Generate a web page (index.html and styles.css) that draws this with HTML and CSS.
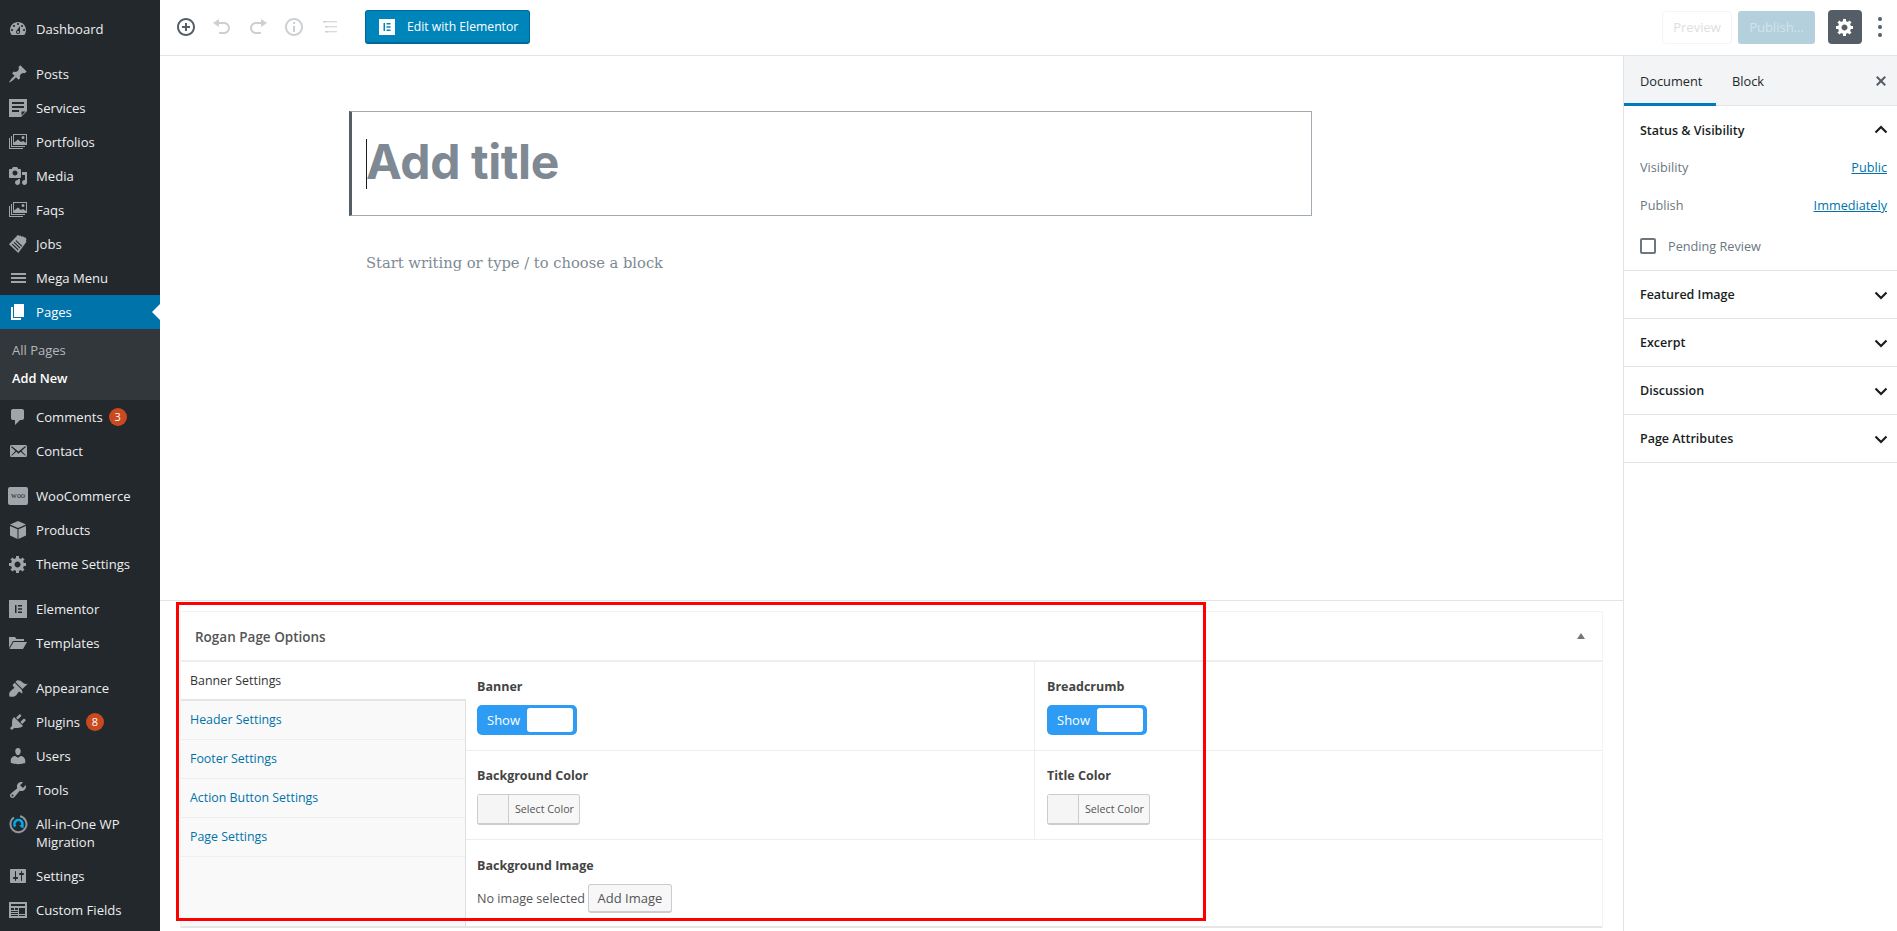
FILE: index.html
```html
<!DOCTYPE html>
<html lang="en">
<head>
<meta charset="utf-8">
<title>Add New Page</title>
<link rel="stylesheet" href="styles.css">
</head>
<body>
<div class="app">
  <nav class="adminmenu">
    <a class="mi gap-top"><span class="ic"><svg viewBox="0 0 20 20"><path d="M3.76 16h12.48c1.1-1.37 1.76-3.11 1.76-5 0-4.42-3.58-8-8-8s-8 3.58-8 8c0 1.89.66 3.63 1.76 5zM10 4c.55 0 1 .45 1 1s-.45 1-1 1-1-.45-1-1 .45-1 1-1zM6 6c.55 0 1 .45 1 1s-.45 1-1 1-1-.45-1-1 .45-1 1-1zm8 0c.55 0 1 .45 1 1s-.45 1-1 1-1-.45-1-1 .45-1 1-1zm-5.37 5.55L12 7v6c0 1.1-.9 2-2 2s-2-.9-2-2c0-.57.24-1.08.63-1.45zM4 10c.55 0 1 .45 1 1s-.45 1-1 1-1-.45-1-1 .45-1 1-1zm12 0c.55 0 1 .45 1 1s-.45 1-1 1-1-.45-1-1 .45-1 1-1zm-5 3c0-.55-.45-1-1-1s-1 .45-1 1 .45 1 1 1 1-.45 1-1z"/></svg></span><span class="lb">Dashboard</span></a>
    <div class="sep"></div>
    <a class="mi"><span class="ic"><svg viewBox="0 0 20 20"><path d="M10.44 3.02l1.82-1.82 6.36 6.35-1.83 1.82c-1.05-.68-2.48-.57-3.41.36l-.75.75c-.92.93-1.04 2.35-.35 3.41l-1.83 1.82-2.41-2.41-2.8 2.79c-.42.42-3.38 2.71-3.8 2.29s1.86-3.39 2.28-3.81l2.79-2.79L4.1 9.36l1.83-1.82c1.05.69 2.48.57 3.4-.36l.75-.75c.93-.92 1.05-2.35.36-3.41z"/></svg></span><span class="lb">Posts</span></a>
    <a class="mi"><span class="ic"><svg viewBox="0 0 20 20"><path fill-rule="evenodd" d="M1 1h18v12l-6 6H1V1zm3 3v2h12V4H4zm0 4v2h12V8H4zm0 4v2h7v-2H4zm9.500 5.500l4-4h-4v4z"/></svg></span><span class="lb">Services</span></a>
    <a class="mi"><span class="ic"><svg viewBox="0 0 20 20"><path fill-rule="evenodd" d="M5 2h14v11H5V2zm1 1v7.500l4-3 3 2.500 2-1 3 2V3H6zm9 1a1.500 1.500 0 100 3 1.500 1.500 0 000-3zM3 4h1v10h13v1H3V4zM1 6h1v10h13v1H1V6z"/></svg></span><span class="lb">Portfolios</span></a>
    <a class="mi"><span class="ic"><svg viewBox="0 0 20 20"><path d="M13 11V4c0-.55-.45-1-1-1h-1.670L9 1H5L3.670 3H2c-.55 0-1 .45-1 1v7c0 .55.45 1 1 1h10c.55 0 1-.45 1-1zM7 4.500c1.380 0 2.500 1.120 2.500 2.500S8.380 9.500 7 9.500 4.500 8.380 4.500 7 5.620 4.500 7 4.500zM14 6h5v10.500c0 1.380-1.120 2.500-2.500 2.500S14 17.880 14 16.500s1.120-2.500 2.500-2.500c.17 0 .34.02.5.05V9h-3V6zm-4 8.050V13h2v3.500c0 1.380-1.120 2.500-2.500 2.500S7 17.880 7 16.500 8.120 14 9.500 14c.17 0 .34.02.5.05z"/></svg></span><span class="lb">Media</span></a>
    <a class="mi"><span class="ic"><svg viewBox="0 0 20 20"><path fill-rule="evenodd" d="M5 2h14v11H5V2zm1 1v7.500l4-3 3 2.500 2-1 3 2V3H6zm9 1a1.500 1.500 0 100 3 1.500 1.500 0 000-3zM3 4h1v10h13v1H3V4zM1 6h1v10h13v1H1V6z"/></svg></span><span class="lb">Faqs</span></a>
    <a class="mi"><span class="ic"><svg viewBox="0 0 20 20"><path fill-rule="evenodd" d="M10 .8l1.200 1.200 1.300-.5 1.200 1.200 1.300-.4 1.200 1.200 1.200-.3 1.100 2-.6 1.300.6 1.200L10.300 19 1 10.300 10 .8zM8.300 6.200l-.8.800 6 5.800.8-.8-6-5.800zM6.500 8l-.8.800 6 5.800.8-.8-6-5.800zM4.700 9.800l-.8.800 6 5.800.8-.8-6-5.800z"/></svg></span><span class="lb">Jobs</span></a>
    <a class="mi"><span class="ic"><svg viewBox="0 0 20 20"><path d="M3 5h15v2H3V5zm0 4h15v2H3V9zm0 4h15v2H3v-2z"/></svg></span><span class="lb">Mega Menu</span></a>
    <a class="mi mi-current"><span class="ic"><svg viewBox="0 0 20 20"><path d="M6 15V2h10v13H6zm-1 1h8v2H3V5h2v11z"/></svg></span><span class="lb">Pages</span></a>
    <div class="submenu">
      <a class="sub">All Pages</a>
      <a class="sub sub-current">Add New</a>
    </div>
    <a class="mi"><span class="ic"><svg viewBox="0 0 20 20"><path d="M5 2h9c1.100 0 2 .9 2 2v7c0 1.100-.9 2-2 2h-2l-5 5v-5H5c-1.100 0-2-.9-2-2V4c0-1.100.9-2 2-2z"/></svg></span><span class="lb">Comments</span><span class="badge">3</span></a>
    <a class="mi"><span class="ic"><svg viewBox="0 0 20 20"><path d="M19 14.500v-9c0-.83-.67-1.500-1.500-1.500H3.490c-.83 0-1.500.67-1.500 1.500v9c0 .83.67 1.500 1.500 1.500H17.500c.83 0 1.500-.67 1.500-1.500zm-1.310-9.110c.33.33.15.67-.03.84L13.600 9.950l3.900 4.060c.12.14.2.36.06.51-.13.16-.43.15-.56.05l-4.370-3.730-2.140 1.950-2.130-1.950-4.370 3.730c-.13.1-.43.11-.56-.05-.14-.15-.06-.37.06-.51l3.900-4.060-4.060-3.720c-.18-.17-.36-.51-.03-.84s.67-.17.95.07l6.240 5.040 6.250-5.040c.28-.24.62-.4.95-.07z"/></svg></span><span class="lb">Contact</span></a>
    <div class="sep"></div>
    <a class="mi"><span class="ic"><span class="woo">woo</span></span><span class="lb">WooCommerce</span></a>
    <a class="mi"><span class="ic"><svg viewBox="0 0 20 20"><path d="M10 1l8 3.500-8 3.500-8-3.500L10 1zM2 6l7.500 3.300V19L2 15.500V6zm16 0v9.500L10.500 19V9.300L18 6z"/></svg></span><span class="lb">Products</span></a>
    <a class="mi"><span class="ic"><svg viewBox="0 0 20 20"><path d="M18 12h-2.180c-.17.7-.44 1.350-.81 1.930l1.540 1.540-2.100 2.100-1.540-1.540c-.58.36-1.230.63-1.910.79V19H8v-2.180c-.68-.16-1.330-.43-1.910-.79l-1.540 1.540-2.120-2.120 1.540-1.540c-.36-.58-.63-1.230-.79-1.910H1V9.030h2.170c.16-.7.44-1.350.8-1.940L2.430 5.550l2.100-2.100 1.540 1.540c.58-.37 1.240-.64 1.930-.81V2h3v2.180c.68.16 1.330.43 1.910.79l1.540-1.540 2.120 2.120-1.540 1.540c.36.59.64 1.240.8 1.940H18V12zm-8.500 1.500c1.660 0 3-1.340 3-3s-1.340-3-3-3-3 1.340-3 3 1.340 3 3 3z"/></svg></span><span class="lb">Theme Settings</span></a>
    <div class="sep"></div>
    <a class="mi"><span class="ic"><svg viewBox="0 0 20 20"><path fill-rule="evenodd" d="M1 1h18v18H1V1zm6 5v8h1.500V6H7zm3 0v1.600h4V6h-4zm0 3.200v1.600h4V9.200h-4zm0 3.200V14h4v-1.600h-4z"/></svg></span><span class="lb">Elementor</span></a>
    <a class="mi"><span class="ic"><svg viewBox="0 0 20 20"><path d="M1 4h6l1.500 2H16v2H5L1 15V4zm4.500 5H19l-4 7H1.500l4-7z"/></svg></span><span class="lb">Templates</span></a>
    <div class="sep"></div>
    <a class="mi"><span class="ic"><svg viewBox="0 0 20 20"><path d="M14.480 11.060L7.410 3.990l1.500-1.500c.5-.56 2.300-.47 3.510.32 1.210.8 1.430 1.280 2.910 2.100 1.180.64 2.450 1.260 4.450.85l-5.300 5.300zm-.71.71L6.700 4.700 4.930 6.470c-.39.39-.39 1.020 0 1.410l1.060 1.060c.39.39.39 1.030 0 1.420-.6.6-1.430 1.110-2.210 1.690-.35.26-.7.53-1.010.84C1.430 13.230.78 15.780 1.400 18.600c2.820.62 5.370-.03 6.710-1.370.31-.31.58-.66.84-1.010.58-.78 1.090-1.610 1.690-2.210.39-.39 1.030-.39 1.420 0l1.060 1.060c.39.39 1.020.39 1.410 0z"/></svg></span><span class="lb">Appearance</span></a>
    <a class="mi"><span class="ic"><svg viewBox="0 0 20 20"><path d="M13.110 4.360L9.870 7.600 8 5.730l3.240-3.240c.35-.34 1.050-.2 1.560.32.52.51.66 1.210.31 1.550zm-8 1.770l.91-1.120 9.010 9.010-1.190.84c-.71.71-2.630 1.160-3.820 1.160H6.140L4.900 17.260c-.59.59-1.540.59-2.120 0-.59-.58-.59-1.530 0-2.120l1.240-1.240v-3.880c0-1.130.4-3.190 1.090-3.890zm7.260 3.970l3.240-3.240c.34-.35 1.040-.21 1.550.31.52.51.66 1.210.31 1.550l-3.240 3.250z"/></svg></span><span class="lb">Plugins</span><span class="badge">8</span></a>
    <a class="mi"><span class="ic"><svg viewBox="0 0 20 20"><path d="M10 9.250c-2.270 0-2.730-3.440-2.730-3.440C7 4.020 7.820 2 9.970 2c2.160 0 2.980 2.020 2.710 3.810 0 0-.41 3.440-2.680 3.440zm0 2.570L12.720 10c2.390 0 4.520 2.330 4.520 4.530v2.490s-3.650 1.130-7.240 1.130c-3.650 0-7.240-1.130-7.240-1.130v-2.490c0-2.250 1.940-4.480 4.470-4.480z"/></svg></span><span class="lb">Users</span></a>
    <a class="mi"><span class="ic"><svg viewBox="0 0 20 20"><path d="M16.680 9.770c-1.340 1.340-3.300 1.670-4.950.99l-5.410 6.520c-.99.99-2.590.99-3.580 0s-.99-2.590 0-3.570l6.520-5.420c-.68-1.650-.35-3.610.99-4.950 1.280-1.280 3.120-1.620 4.720-1.060l-2.890 2.890 2.820 2.820 2.860-2.870c.53 1.580.18 3.390-1.080 4.650zM3.810 16.210c.4.39 1.040.39 1.430 0 .4-.4.4-1.040 0-1.430-.39-.4-1.030-.4-1.430 0-.39.39-.39 1.030 0 1.430z"/></svg></span><span class="lb">Tools</span></a>
    <a class="mi mi-tall"><span class="ic"><svg viewBox="0 0 20 20"><path fill="none" stroke="#8f979e" stroke-width="2" d="M6 3.500A8 8 0 1 0 12 2.300"/><path fill="none" stroke="#00aeef" stroke-width="2.600" d="M7.300 12.500A4 4 0 1 1 13 13"/><path fill="#00aeef" d="M11 11h4.500v3.500z"/></svg></span><span class="lb">All-in-One WP<br>Migration</span></a>
    <a class="mi"><span class="ic"><svg viewBox="0 0 20 20"><path d="M18 16V4c0-.55-.45-1-1-1H3c-.55 0-1 .45-1 1v12c0 .55.45 1 1 1h14c.55 0 1-.45 1-1zM8 11h1c.55 0 1 .45 1 1s-.45 1-1 1H8v1.500c0 .28-.22.5-.5.5s-.5-.22-.5-.5V13H6c-.55 0-1-.45-1-1s.45-1 1-1h1V5.500c0-.28.22-.5.5-.5s.5.22.5.5V11zm5-2h-1c-.55 0-1-.45-1-1s.45-1 1-1h1V5.500c0-.28.22-.5.5-.5s.5.22.5.5V7h1c.55 0 1 .45 1 1s-.45 1-1 1h-1v5.500c0 .28-.22.5-.5.5s-.5-.22-.5-.5V9z"/></svg></span><span class="lb">Settings</span></a>
    <a class="mi"><span class="ic"><svg viewBox="0 0 20 20"><path fill-rule="evenodd" d="M1 2h18v16H1V2zm2 2v2h14V4H3zm0 4v2h3V8H3zm4 0v2h3V8H7zm4 0v6h6V8h-6zm-8 3v1h7v-1H3zm0 2v1h7v-1H3zm0 2v1h7v-1H3zm8 0v1h6v-1h-6z"/></svg></span><span class="lb">Custom Fields</span></a>
  </nav>

  <div class="workspace">
    <header class="topbar">
      <div class="tools">
        <span class="tool tool-on"><svg viewBox="0 0 20 20"><path d="M10 1c-5 0-9 4-9 9s4 9 9 9 9-4 9-9-4-9-9-9zm0 16c-3.900 0-7-3.100-7-7s3.100-7 7-7 7 3.100 7 7-3.100 7-7 7zm1-11H9v3H6v2h3v3h2v-3h3V9h-3V6z"/></svg></span>
        <span class="tool"><svg viewBox="0 0 20 20"><path d="M12 5H7V2L1 6l6 4V7h5c2.200 0 4 1.800 4 4s-1.800 4-4 4H7v2h5c3.300 0 6-2.700 6-6s-2.700-6-6-6z"/></svg></span>
        <span class="tool"><svg viewBox="0 0 20 20"><path d="M8 5h5V2l6 4-6 4V7H8c-2.200 0-4 1.800-4 4s1.800 4 4 4h5v2H8c-3.300 0-6-2.700-6-6s2.700-6 6-6z"/></svg></span>
        <span class="tool"><svg viewBox="0 0 20 20"><path d="M10 1c-5 0-9 4-9 9s4 9 9 9 9-4 9-9-4-9-9-9zm0 16c-3.900 0-7-3.100-7-7s3.100-7 7-7 7 3.100 7 7-3.100 7-7 7zM9 9h2v6H9V9zm0-4h2v2H9V5z"/></svg></span>
        <span class="tool"><svg viewBox="0 0 20 20"><path d="M3 4h3v1.500H3V4zm3 .3h11v1H6zM5 9h3v1.500H5V9zm3 .3h9v1H8zM5 14h3v1.500H5V14zm3 .3h9v1H8z"/></svg></span>
      </div>
      <a class="elementor-btn"><span class="el-logo"><svg viewBox="0 0 16 16"><path fill="#0085ba" d="M4.500 4h1.500v8H4.500V4zm3 0h4v1.500h-4V4zm0 3.250h4v1.500h-4v-1.500zm0 3.250h4V12h-4v-1.500z"/></svg></span>Edit with Elementor</a>
      <div class="spacer"></div>
      <a class="btn-preview">Preview</a>
      <a class="btn-publish">Publish...</a>
      <a class="btn-gear"><svg viewBox="0 0 20 20"><path d="M18 12h-2.180c-.17.7-.44 1.350-.81 1.930l1.540 1.540-2.100 2.100-1.540-1.540c-.58.36-1.230.63-1.910.79V19H8v-2.180c-.68-.16-1.330-.43-1.910-.79l-1.540 1.540-2.120-2.120 1.540-1.540c-.36-.58-.63-1.230-.79-1.910H1V9.030h2.170c.16-.7.44-1.350.8-1.940L2.430 5.550l2.100-2.100 1.540 1.540c.58-.37 1.240-.64 1.930-.81V2h3v2.180c.68.16 1.330.43 1.910.79l1.540-1.540 2.120 2.120-1.540 1.540c.36.59.64 1.240.8 1.940H18V12zm-8.500 1.500c1.660 0 3-1.340 3-3s-1.340-3-3-3-3 1.340-3 3 1.340 3 3 3z"/></svg></a>
      <span class="kebab"><i></i><i></i><i></i></span>
    </header>

    <div class="body-row">
      <main class="editor">
        <section class="canvas">
          <div class="title-box"><span class="caret"></span><span class="title-ph">Add title</span></div>
          <p class="block-ph">Start writing or type / to choose a block</p>
        </section>
        <section class="metaboxes">
          <div class="metabox">
            <div class="mb-head"><span class="mb-title">Rogan Page Options</span><span class="mb-toggle"></span></div>
            <div class="mb-body">
              <ul class="mb-tabs">
                <li class="tab tab-active">Banner Settings</li>
                <li class="tab">Header Settings</li>
                <li class="tab">Footer Settings</li>
                <li class="tab">Action Button Settings</li>
                <li class="tab">Page Settings</li>
              </ul>
              <div class="mb-fields">
                <div class="field field-l">
                  <div class="f-label">Banner</div>
                  <div class="switch"><span class="sw-text">Show</span><span class="sw-knob"></span></div>
                </div>
                <div class="field field-r">
                  <div class="f-label">Breadcrumb</div>
                  <div class="switch"><span class="sw-text">Show</span><span class="sw-knob"></span></div>
                </div>
                <div class="field field-l">
                  <div class="f-label">Background Color</div>
                  <div class="color-btn"><span class="swatch"></span><span class="color-text">Select Color</span></div>
                </div>
                <div class="field field-r">
                  <div class="f-label">Title Color</div>
                  <div class="color-btn"><span class="swatch"></span><span class="color-text">Select Color</span></div>
                </div>
                <div class="field field-wide">
                  <div class="f-label">Background Image</div>
                  <div class="img-row"><span class="img-none">No image selected</span><a class="add-img">Add Image</a></div>
                </div>
              </div>
            </div>
          </div>
          <div class="highlight"></div>
        </section>
      </main>

      <aside class="settings">
        <div class="s-tabs">
          <span class="s-tab s-tab-active">Document</span>
          <span class="s-tab">Block</span>
          <span class="s-close"><svg viewBox="0 0 20 20"><path d="M14.950 6.460L11.410 10l3.540 3.540-1.410 1.410L10 11.420l-3.530 3.530-1.420-1.420L8.580 10 5.050 6.470l1.420-1.420L10 8.580l3.540-3.530z"/></svg></span>
        </div>
        <div class="panel panel-open">
          <div class="p-head"><span>Status &amp; Visibility</span><svg class="chev" viewBox="0 0 20 20"><path d="M4.500 12.500L10 7l5.500 5.500"/></svg></div>
          <div class="p-row"><span>Visibility</span><a class="p-link">Public</a></div>
          <div class="p-row"><span>Publish</span><a class="p-link">Immediately</a></div>
          <div class="p-check"><span class="cb"></span><span>Pending Review</span></div>
        </div>
        <div class="panel"><div class="p-head"><span>Featured Image</span><svg class="chev" viewBox="0 0 20 20"><path d="M4.500 7.500L10 13l5.500-5.500"/></svg></div></div>
        <div class="panel"><div class="p-head"><span>Excerpt</span><svg class="chev" viewBox="0 0 20 20"><path d="M4.500 7.500L10 13l5.500-5.500"/></svg></div></div>
        <div class="panel"><div class="p-head"><span>Discussion</span><svg class="chev" viewBox="0 0 20 20"><path d="M4.500 7.500L10 13l5.500-5.500"/></svg></div></div>
        <div class="panel"><div class="p-head"><span>Page Attributes</span><svg class="chev" viewBox="0 0 20 20"><path d="M4.500 7.500L10 13l5.500-5.500"/></svg></div></div>
      </aside>
    </div>
  </div>
</div>
</body>
</html>
```
FILE: styles.css
```css
* { box-sizing: border-box; }
html, body { margin: 0; height: 100%; }
body {
  background: #fff;
  font-family: "Open Sans", "Liberation Sans", sans-serif;
  font-size: 13px;
  color: #444;
  overflow: hidden;
}
a { text-decoration: none; }
ul { list-style: none; margin: 0; padding: 0; }
.app { display: flex; width: 1897px; height: 931px; overflow: hidden; }

/* admin menu */
.adminmenu { width: 160px; flex: none; background: #23282d; padding-top: 12px; color: #eee; }
.mi { display: flex; align-items: flex-start; height: 34px; padding: 8px 0; line-height: 18px; color: #eee; font-size: 13.100px; position: relative; }
.mi-tall { height: 52px; }
.ic { width: 36px; flex: none; display: flex; justify-content: center; height: 20px; margin-top: -1px; }
.ic svg { width: 20px; height: 20px; fill: #a0a5aa; display: block; }
.sep { height: 11px; }
.mi-current { background: #0073aa; color: #fff; }
.mi-current .ic svg { fill: #fff; }
.mi-current::after {
  content: ""; position: absolute; right: 0; top: 9px;
  border: 8px solid transparent; border-right-color: #fff; border-left-width: 0;
}
.submenu { height: 71px; background: #32373c; padding-top: 7px; }
.sub { display: block; height: 28px; line-height: 28px; padding-left: 12px; font-size: 13px; color: #b4b9be; }
.sub-current { color: #fff; font-weight: 600; font-size: 12.800px; }
.badge {
  width: 18px; height: 18px; border-radius: 50%; background: #ca4a1f; color: #fff;
  font-size: 11px; line-height: 18px; text-align: center; margin-left: 6px; font-weight: 400;
}
.woo {
  width: 20px; height: 18px; margin-top: 1px; background: #a0a5aa; border-radius: 2px; color: #23282d;
  font-size: 8px; line-height: 17px; text-align: center; font-family: "Liberation Serif", serif;
}

/* workspace */
.workspace { flex: 1; min-width: 0; display: flex; flex-direction: column; }
.topbar { height: 56px; flex: none; display: flex; align-items: center; border-bottom: 1px solid #e2e4e7; padding-bottom: 1px; }
.tools { display: flex; margin-left: 16px; gap: 16px; }
.tool { width: 20px; height: 20px; }
.tool svg { width: 20px; height: 20px; display: block; fill: #ccd0d4; }
.tool-on svg { fill: #555d66; }
.elementor-btn {
  margin-left: 25px; width: 165px; height: 34px; display: flex; align-items: center; padding-left: 13px; gap: 12px;
  background: #0085ba; border: 1px solid #006799; border-width: 1px 1px 2px; border-radius: 3px;
  color: #fff; font-size: 12.200px;
}
.el-logo { width: 16px; height: 16px; background: #fff; display: block; }
.el-logo svg { display: block; width: 16px; height: 16px; }
.spacer { flex: 1; }
.btn-preview {
  width: 70px; height: 33px; border: 1px solid #f3f4f5; border-radius: 3px; color: #dcdfe2;
  display: flex; align-items: center; justify-content: center; font-size: 13px;
}
.btn-publish {
  margin-left: 6px; width: 77px; height: 33px; background: #b4d0dc; border-radius: 3px; color: #d3e3ea;
  display: flex; align-items: center; justify-content: center; font-size: 13px;
}
.btn-gear {
  margin-left: 13px; width: 34px; height: 34px; background: #555d66; border-radius: 4px;
  display: flex; align-items: center; justify-content: center;
}
.btn-gear svg { width: 20px; height: 20px; fill: #fff; }
.kebab { width: 35px; display: flex; flex-direction: column; align-items: center; gap: 4px; }
.kebab i { width: 4px; height: 4px; border-radius: 50%; background: #555d66; display: block; }

.body-row { flex: 1; display: flex; min-height: 0; }
.editor { flex: 1; min-width: 0; display: flex; flex-direction: column; }
.canvas { height: 545px; flex: none; padding: 55px 0 0 189px; border-bottom: 1px solid #e2e4e7; }
.title-box {
  width: 963px; height: 105px; border: 1px solid #a2aab2; border-left: 3px solid #555d66;
  padding: 0 0 4px 14px; display: flex; align-items: center; position: relative;
}
.caret { position: absolute; left: 14px; top: 27px; width: 1px; height: 50px; background: #191e23; }
.title-ph { font-family: Inter, "Open Sans", sans-serif; font-weight: 700; font-size: 48px; color: #7e8993; line-height: 1; letter-spacing: -.4px; }
.block-ph { margin: 37px 0 0 17px; font-family: "DejaVu Serif", serif; font-size: 14.700px; line-height: 20px; color: #7e8993; }

/* metabox */
.metaboxes { flex: 1; padding: 10px 20px 0; position: relative; }
.metabox { border: 1px solid #f3f3f3; border-bottom: 0; height: 317px; display: flex; flex-direction: column; }
.mb-head { height: 50px; flex: none; display: flex; align-items: center; justify-content: space-between; padding: 2px 17px 0 14px; border-bottom: 2px solid #eee; }
.mb-title { font-size: 13.500px; font-weight: 600; color: #555; }
.mb-toggle { width: 0; height: 0; border: 4px solid transparent; border-bottom: 6px solid #72777c; border-top: 0; margin-top: -3px; }
.mb-body { display: grid; grid-template-columns: 285px 1fr; height: 266px; border-bottom: 2px solid #e5e5e5; }
.mb-tabs { background: #f9f9f9; border-right: 1px solid #dfdfdf; }
.tab { height: 39px; line-height: 38px; padding-left: 9px; font-size: 12.400px; color: #0073aa; border-bottom: 1px solid #eee; }
.tab-active { background: #fff; color: #333; border-bottom: 2px solid #e5e5e5; margin-right: -1px; position: relative; }
.mb-fields { display: grid; grid-template-columns: 569px 1fr; grid-template-rows: 89px 89px 1fr; }
.field { padding: 17px 11px 0 11px; border-bottom: 1px solid #eee; }
.field-l { border-right: 1px solid #eee; }
.field-r { padding-left: 12px; }
.field-wide { grid-column: 1 / -1; border-bottom: 0; padding-top: 18px; }
.f-label { font-size: 12.500px; font-weight: 700; line-height: 16px; color: #444; }
.switch {
  margin-top: 10px; width: 100px; height: 30px; background: #2e9cf4; border-radius: 5px;
  display: flex; align-items: center; justify-content: space-between; padding: 0 4px 0 10px;
}
.sw-text { color: #fff; font-size: 13px; }
.sw-knob { width: 46px; height: 24px; background: #fff; border-radius: 3px; display: block; }
.color-btn {
  margin-top: 10px; width: 103px; height: 31px; background: #f7f7f7; border: 1px solid #ccc; border-bottom-width: 2px;
  border-radius: 3px; display: flex; align-items: stretch;
}
.swatch { width: 31px; background: #f5f5f5; border-right: 1px solid #ccc; display: block; }
.color-text { padding-left: 6px; font-size: 10.700px; line-height: 28px; color: #555; }
.img-row { margin-top: 10px; display: flex; align-items: center; height: 29px; gap: 3px; }
.img-none { font-size: 12.600px; color: #555; }
.add-img {
  width: 84px; height: 29px; background: #f7f7f7; border: 1px solid #ccc; border-bottom-width: 2px; border-radius: 3px;
  color: #555; font-size: 13px; line-height: 26px; text-align: center;
}
.highlight { position: absolute; left: 16px; top: 1px; width: 1030px; height: 319px; border: 3px solid #f00; pointer-events: none; }

/* settings sidebar */
.settings { width: 274px; flex: none; border-left: 1px solid #e2e4e7; color: #191e23; }
.s-tabs { height: 50px; background: #f3f4f5; border-bottom: 1px solid #e2e4e7; display: flex; align-items: stretch; position: relative; }
.s-tab { padding: 0 16px; line-height: 50px; font-size: 12.800px; color: #23282d; }
.s-tab-active { width: 92px; border-bottom: 3px solid #007cba; font-weight: 500; height: 50px; line-height: 50px; }
.s-close { position: absolute; right: 6px; top: 15px; width: 20px; height: 20px; }
.s-close svg { width: 20px; height: 20px; fill: #555d66; display: block; }
.panel { border-bottom: 1px solid #e2e4e7; height: 48px; }
.panel-open { height: 165px; }
.p-head { height: 47px; padding: 0 6px 0 16px; display: flex; align-items: center; justify-content: space-between; font-size: 12.500px; font-weight: 600; color: #191e23; }
.panel-open .p-head { height: 42px; padding-top: 6px; }
.chev { width: 20px; height: 20px; fill: none; stroke: #191e23; stroke-width: 2.200; }
.p-row { height: 38px; padding: 0 10px 0 16px; display: flex; align-items: center; justify-content: space-between; color: #6c7781; font-size: 12.700px; }
.p-link { color: #0073aa; text-decoration: underline; }
.p-check { display: flex; align-items: center; gap: 12px; padding: 0 16px; color: #6c7781; font-size: 12.700px; height: 44px; }
.cb { width: 16px; height: 16px; border: 2px solid #6c7781; border-radius: 2px; display: block; }
```
